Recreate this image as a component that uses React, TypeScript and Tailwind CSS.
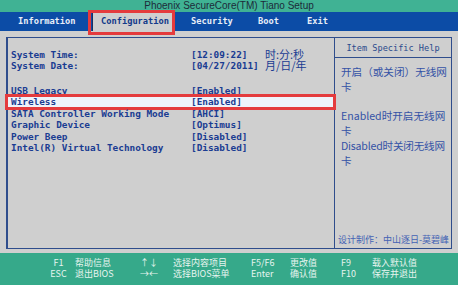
const mono = { fontFamily: '"DejaVu Sans Mono", "Liberation Mono", monospace' }
const cjk = { fontFamily: '"Noto Sans CJK SC", "Noto Sans", sans-serif' }

const rows = [
  ['USB Legacy', '[Enabled]'],
  ['Wireless', '[Enabled]'],
  ['SATA Controller Working Mode', '[AHCI]'],
  ['Graphic Device', '[Optimus]'],
  ['Power Beep', '[Disabled]'],
  ['Intel(R) Virtual Technology', '[Disabled]'],
]

const keys = [
  ['F1', '帮助信息', '↑↓', '选择内容项目', 'F5/F6', '更改值', 'F9', '载入默认值'],
  ['ESC', '退出BIOS', '→←', '选择BIOS菜单', 'Enter', '确认值', 'F10', '保存并退出'],
]

function Row({ label, value, hot }: { label: string; value: string; hot?: boolean }) {
  return (
    <div className={`relative flex pl-[3px] h-[11.4px] leading-[11.4px] ${hot ? 'bg-[#eef3fa]' : ''}`}>
      <span className="w-[180px] shrink-0">{label}</span>
      <span>{value}</span>
      {hot && <span className="absolute -left-[3px] -right-[2px] -top-[2px] -bottom-[2px] border-[3px] border-[#e43b3d]" />}
    </div>
  )
}

export default function App() {
  return (
    <div className="w-[458px] h-[285px] flex flex-col bg-[#cfcfcf] overflow-hidden">
      <div
        className="h-[12px] bg-[#40b294] text-center text-[10px] leading-[12px] text-[#1d2b3a]"
        style={{ fontFamily: '"Liberation Sans", Arial, sans-serif' }}
      >
        Phoenix SecureCore(TM) Tiano Setup
      </div>

      <div className="h-[19px] bg-[#0c4ca6] flex items-end text-[8.7px] font-bold text-[#e8eef8]" style={mono}>
        <div className="w-[74px] ml-[18px] h-full leading-[19px]">Information</div>
        <div className="relative w-[80px] h-[18px] bg-[#cfcfcf] border-l border-[#1b2f60] pl-[8px] leading-[17px] text-[#123a8a]">
          Configuration
          <span className="absolute -left-[5px] -right-[3px] -top-[3px] -bottom-[4px] border-[3px] border-[#e43b3d] z-10" />
        </div>
        <div className="w-[67px] ml-[19px] h-full leading-[19px]">Security</div>
        <div className="w-[49px] h-full leading-[19px]">Boot</div>
        <div className="h-full leading-[19px]">Exit</div>
      </div>

      <div className="flex-1 pt-[6px] px-[6px] pb-[4px]">
        <div className="h-full flex border border-l-2 border-[#2f4d8c]">
          <div className="w-[326px] shrink-0 pt-[11px] text-[9.4px] font-bold text-[#1a3c92]" style={mono}>
            <div className="flex items-center pl-[3px] h-[11px] leading-[11px]">
              <span className="w-[180px] shrink-0">System Time:</span>
              <span className="w-[74px]">[12:09:22]</span>
              <span style={cjk} className="text-[11px] leading-[11px] font-normal">时:分:秒</span>
            </div>
            <div className="flex items-center pl-[3px] h-[11px] leading-[11px]">
              <span className="w-[180px] shrink-0">System Date:</span>
              <span className="w-[74px]">[04/27/2011]</span>
              <span style={cjk} className="text-[11px] leading-[11px] font-normal">月/日/年</span>
            </div>
            <div className="mt-[14px]">
              {rows.map(([l, v]) => (
                <Row key={l} label={l} value={v} hot={l === 'Wireless'} />
              ))}
            </div>
          </div>

          <div className="flex-1 flex flex-col border-l border-[#2f4d8c]">
            <div className="h-[20px] border-b border-[#2f4d8c] text-center text-[8.6px] leading-[20px] text-[#2a4a8c]" style={mono}>
              Item Specific Help
            </div>
            <div className="pl-[6px] pt-[6px] text-[10.6px] leading-[15px] whitespace-nowrap text-[#3452a6]" style={cjk}>
              <div>开启（或关闭）无线网</div>
              <div>卡</div>
              <div className="h-[14px]" />
              <div>Enabled时开启无线网</div>
              <div>卡</div>
              <div className="tracking-[-0.2px]">Disabled时关闭无线网</div>
              <div>卡</div>
            </div>
            <div className="mt-auto pl-[3px] pb-[2px] text-[9px] leading-[12px] text-[#4462b4]" style={cjk}>
              设计制作：中山逐日-莫碧峰
            </div>
          </div>
        </div>
      </div>

      <div className="h-[32px] bg-[#36a98a] pt-[5px] text-[9px] text-[#e6f4ef]" style={cjk}>
        {keys.map((r, i) => (
          <div key={i} className="flex h-[10.5px] leading-[10.5px]">
            <span className="w-[33px] ml-[42px] text-center">{r[0]}</span>
            <span className="w-[65px]">{r[1]}</span>
            <span className="w-[33px]">{r[2]}</span>
            <span className="w-[78px]">{r[3]}</span>
            <span className="w-[39px]">{r[4]}</span>
            <span className="w-[51px]">{r[5]}</span>
            <span className="w-[31px]">{r[6]}</span>
            <span>{r[7]}</span>
          </div>
        ))}
      </div>
    </div>
  )
}
